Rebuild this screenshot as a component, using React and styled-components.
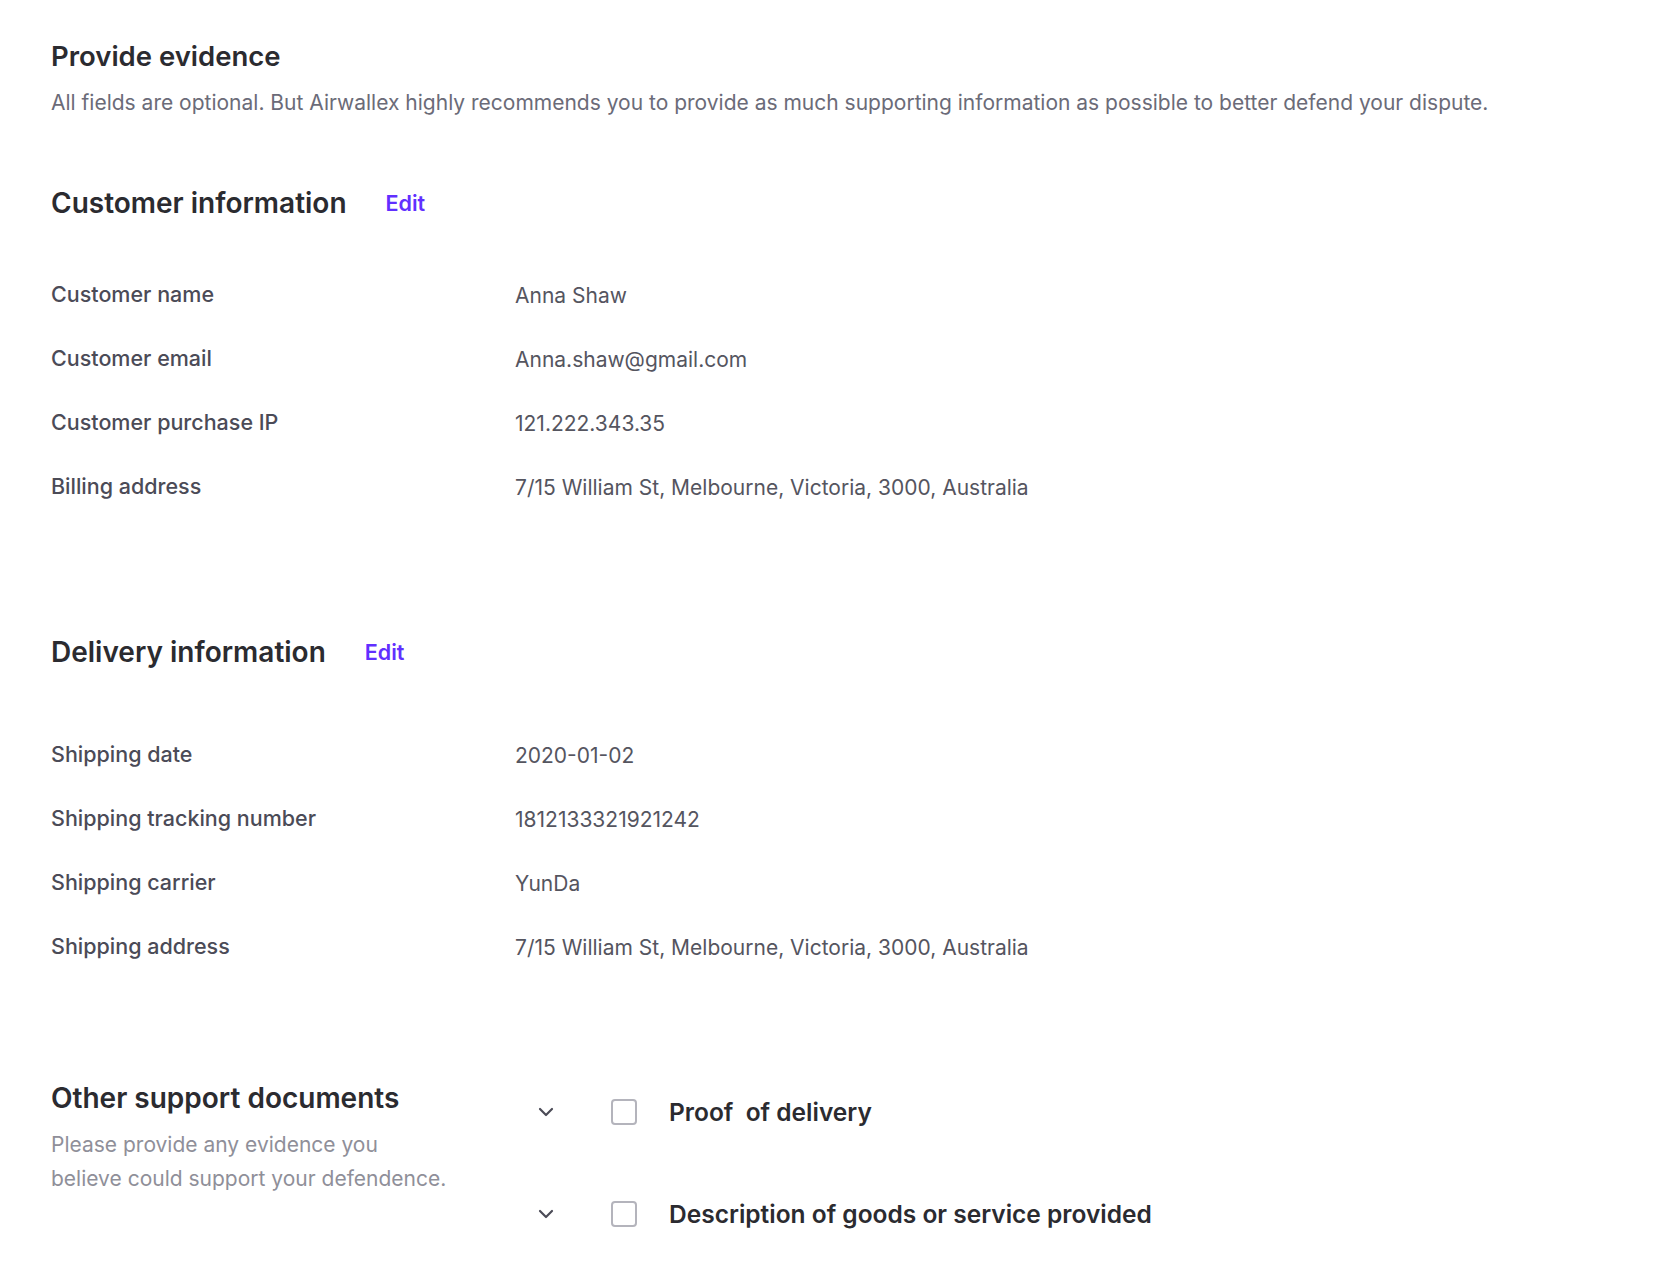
import React from 'react';
import styled, { createGlobalStyle } from 'styled-components';

const GlobalStyle = createGlobalStyle`
  body {
    margin: 0;
    background: #ffffff;
    font-family: Inter, "Liberation Sans", sans-serif;
    color: #2b2b30;
  }
`;

const Page = styled.div`
  padding: 40px 51px 40px 51px;
`;

const PageTitle = styled.h1`
  margin: 0;
  font-size: 27.5px;
  line-height: 32px;
  font-weight: 600;
  color: #2b2b30;
`;

const Intro = styled.p`
  margin: 16px 0 0 0;
  font-size: 21px;
  line-height: 30px;
  color: #6b6b78;
`;

const Section = styled.section`
  margin-top: ${p => p.$top}px;
`;

const SectionHead = styled.div`
  display: flex;
  align-items: center;
  gap: 39px;
  margin-bottom: ${p => p.$gap}px;
`;

const SectionTitle = styled.h2`
  margin: 0;
  font-size: 28px;
  line-height: 36px;
  font-weight: 600;
  color: #2b2b30;
`;

const EditLink = styled.a`
  font-size: 21.5px;
  font-weight: 600;
  color: #612fff;
  cursor: pointer;
`;

const Row = styled.div`
  display: grid;
  grid-template-columns: 464px 1fr;
  align-items: center;
  height: 64px;
`;

const Label = styled.div`
  font-size: 21.5px;
  font-weight: 500;
  color: #4b4b57;
`;

const Value = styled.div`
  font-size: 21px;
  color: #55555f;
  padding-top: 2px;
`;

const DocsLayout = styled.div`
  display: grid;
  grid-template-columns: 464px 1fr;
`;

const DocsIntro = styled.div`
  max-width: 400px;
`;

const DocsText = styled.p`
  margin: 12px 0 0 0;
  max-width: 396px;
  font-size: 21px;
  line-height: 34px;
  color: #8f8f99;
`;

const DocList = styled.div`
  display: flex;
  flex-direction: column;
  gap: 62px;
  padding-top: 12px;
`;

const DocItem = styled.div`
  display: flex;
  align-items: center;
  height: 40px;
`;

const Chevron = styled.span`
  display: flex;
  justify-content: center;
  width: 62px;
  color: #4b4b57;
`;

const Box = styled.span`
  width: 22px;
  height: 22px;
  border: 2px solid #b4b4bc;
  border-radius: 4px;
  margin-left: 34px;
  margin-right: 32px;
`;

const DocName = styled.span`
  font-size: 24.5px;
  font-weight: 600;
  color: #2b2b30;
  white-space: pre;
`;

const customer = [
  ['Customer name', 'Anna Shaw'],
  ['Customer email', 'Anna.shaw@gmail.com'],
  ['Customer purchase IP', '121.222.343.35'],
  ['Billing address', '7/15 William St, Melbourne, Victoria, 3000, Australia'],
];

const delivery = [
  ['Shipping date', '2020-01-02'],
  ['Shipping tracking number', '1812133321921242'],
  ['Shipping carrier', 'YunDa'],
  ['Shipping address', '7/15 William St, Melbourne, Victoria, 3000, Australia'],
];

const docs = ['Proof  of delivery', 'Description of goods or service provided'];

function InfoRows({ rows }) {
  return rows.map(([k, v]) => (
    <Row key={k}>
      <Label>{k}</Label>
      <Value>{v}</Value>
    </Row>
  ));
}

export default function App() {
  return (
    <Page>
      <GlobalStyle />
      <PageTitle>Provide evidence</PageTitle>
      <Intro>
        All fields are optional. But Airwallex highly recommends you to provide as much supporting
        information as possible to better defend your dispute.
      </Intro>

      <Section $top={67}>
        <SectionHead $gap={41}>
          <SectionTitle>Customer information</SectionTitle>
          <EditLink>Edit</EditLink>
        </SectionHead>
        <InfoRows rows={customer} />
      </Section>

      <Section $top={116}>
        <SectionHead $gap={52}>
          <SectionTitle>Delivery information</SectionTitle>
          <EditLink>Edit</EditLink>
        </SectionHead>
        <InfoRows rows={delivery} />
      </Section>

      <Section $top={102}>
        <DocsLayout>
          <DocsIntro>
            <SectionTitle>Other support documents</SectionTitle>
            <DocsText>Please provide any evidence you believe could support your defendence.</DocsText>
          </DocsIntro>
          <DocList>
            {docs.map(d => (
              <DocItem key={d}>
                <Chevron>
                  <svg width="16" height="10" viewBox="0 0 16 10" fill="none">
                    <path d="M2 2l6 6 6-6" stroke="currentColor" strokeWidth="2.2" strokeLinecap="round" strokeLinejoin="round" />
                  </svg>
                </Chevron>
                <Box />
                <DocName>{d}</DocName>
              </DocItem>
            ))}
          </DocList>
        </DocsLayout>
      </Section>
    </Page>
  );
}
